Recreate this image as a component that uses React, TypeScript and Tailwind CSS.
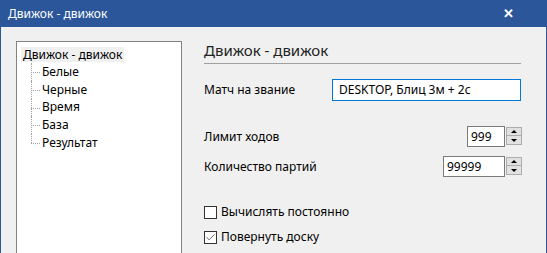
import { Check } from 'lucide-react'

const treeItems = ['Белые', 'Черные', 'Время', 'База', 'Результат']

function Spinner({ value, width }: { value: string; width: string }) {
  return (
    <div className="mr-[-2px] flex h-[21px]">
      <div className={`${width} h-full border border-[#7a7a7a] bg-white pl-[3px] leading-[19px] text-black`}>
        {value}
      </div>
      <div className="flex w-[18px] flex-col px-[1px] py-[1px]">
        <div className="flex h-[9px] items-center justify-center border border-[#adadad] bg-[#e1e1e1]">
          <div className="h-0 w-0 border-x-[3px] border-b-[3px] border-x-transparent border-b-black" />
        </div>
        <div className="flex h-[9px] items-center justify-center border border-t-0 border-[#adadad] bg-[#e1e1e1]">
          <div className="h-0 w-0 border-x-[3px] border-t-[3px] border-x-transparent border-t-black" />
        </div>
      </div>
    </div>
  )
}

function CheckRow({ label, checked }: { label: string; checked: boolean }) {
  return (
    <div className="flex h-[16px] items-center gap-[4px]">
      <div className="flex h-[13px] w-[13px] items-center justify-center border border-[#333] bg-white">
        {checked && <Check size={11} strokeWidth={1.6} className="text-[#333]" />}
      </div>
      <span>{label}</span>
    </div>
  )
}

export default function App() {
  return (
    <div
      className="flex h-[253px] w-[547px] flex-col overflow-hidden border-x border-[#2b579a] bg-[#f0f0f0] text-[12px] leading-[16px] text-black"
      style={{ fontFamily: '"Noto Sans", "Segoe UI", sans-serif' }}
    >
      <div className="flex h-[27px] shrink-0 items-center justify-between bg-[#2b579a] pl-[7px] pr-[32px] text-white">
        <span>Движок - движок</span>
        <span className="text-[13px] font-bold leading-none">✕</span>
      </div>

      <div className="flex flex-1 pl-[15px] pt-[14px]">
        <div className="w-[166px] border border-b-0 border-[#828282] bg-white pl-[4px] pt-[5px]">
          <div className="inline-block bg-[#f0f0f0] px-[2px] leading-[15px]">Движок - движок</div>
          <div className="ml-[10px]">
            {treeItems.map((item, i) => (
              <div key={item} className="relative flex h-[17.75px] items-center pl-[11px]">
                <div
                  className={`absolute left-0 top-0 border-l border-dotted border-[#a0a0a0] ${
                    i === treeItems.length - 1 ? 'h-[9px]' : 'h-[17.75px]'
                  }`}
                />
                <div className="absolute left-0 top-[9px] w-[9px] border-t border-dotted border-[#a0a0a0]" />
                <span>{item}</span>
              </div>
            ))}
          </div>
        </div>

        <div className="ml-[22px] mt-[-1px] flex w-[317px] flex-col">
          <div className="border-b border-[#a0a0a0] pb-[3px] text-[15px] leading-[20px] text-[#222]">
            Движок - движок
          </div>

          <div className="mt-[15px] flex h-[22px] items-center justify-between">
            <span>Матч на звание</span>
            <div className="h-[22px] w-[189px] border border-[#0078d7] bg-white pl-[6px] leading-[20px]">
              DESKTOP, Блиц 3м + 2с
            </div>
          </div>

          <div className="mt-[25px] flex items-center justify-between">
            <span>Лимит ходов</span>
            <Spinner value="999" width="w-[38px]" />
          </div>

          <div className="mt-[9px] flex items-center justify-between">
            <span>Количество партий</span>
            <Spinner value="99999" width="w-[62px]" />
          </div>

          <div className="mt-[27px] flex flex-col gap-[9px]">
            <CheckRow label="Вычислять постоянно" checked={false} />
            <CheckRow label="Повернуть доску" checked={true} />
          </div>
        </div>
      </div>
    </div>
  )
}
